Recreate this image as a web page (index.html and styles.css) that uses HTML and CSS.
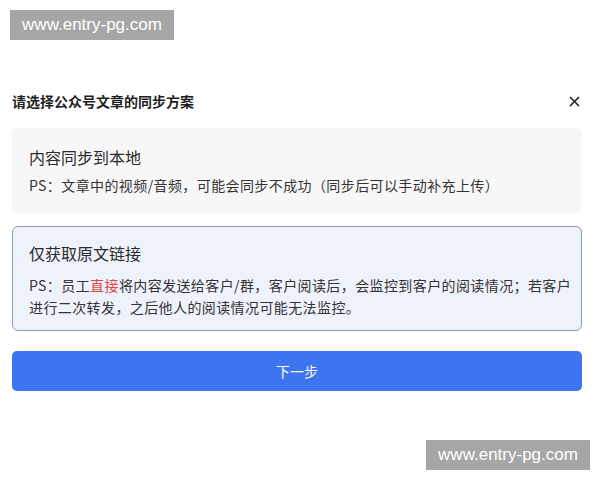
FILE: index.html
```html
<!DOCTYPE html>
<html lang="zh-CN">
<head>
  <meta charset="UTF-8">
  <meta name="viewport" content="width=device-width, initial-scale=1.0">
  <title>同步方案</title>
  <link rel="stylesheet" href="styles.css">
</head>
<body>
  <div class="dialog">
    <div class="dialog-header">
      <h2>请选择公众号文章的同步方案</h2>
      <span class="close">
        <svg width="11" height="11" viewBox="0 0 11 11"><path d="M1 1L10 10M10 1L1 10" stroke="#222" stroke-width="1.6" fill="none"/></svg>
      </span>
    </div>

    <div class="option">
      <h3>内容同步到本地</h3>
      <p>PS：文章中的视频/音频，可能会同步不成功（同步后可以手动补充上传）</p>
    </div>

    <div class="option active">
      <h3>仅获取原文链接</h3>
      <p>PS：员工<span class="hl">直接</span>将内容发送给客户/群，客户阅读后，会监控到客户的阅读情况；若客户进行二次转发，之后他人的阅读情况可能无法监控。</p>
    </div>

    <a href="#" class="btn">下一步</a>
  </div>

  <div class="mark mark-top">www.entry-pg.com</div>
  <div class="mark mark-bottom">www.entry-pg.com</div>
</body>
</html>
```

FILE: styles.css
```css
* {
  margin: 0;
  padding: 0;
  box-sizing: border-box;
}

body {
  background: #fff;
  font-family: 'Noto Sans CJK SC', 'Noto Sans', sans-serif;
  color: #333;
  width: 600px;
  height: 480px;
  position: relative;
  overflow: hidden;
}

.dialog {
  padding: 91px 18px 0 12px;
}

.dialog-header {
  display: flex;
  justify-content: space-between;
  align-items: center;
  height: 20px;
  margin-bottom: 17px;
}

.dialog-header h2 {
  font-size: 14px;
  font-weight: bold;
  color: #1f1f1f;
  line-height: 20px;
}

.close {
  display: flex;
  margin-right: 2px;
}

.option {
  background: #f7f7f7;
  border-radius: 6px;
  padding: 17px 17px 17px;
  margin-bottom: 13px;
}

.option h3 {
  font-size: 16px;
  font-weight: normal;
  color: #2b2b2b;
  line-height: 24px;
  margin-bottom: 5px;
}

.option p {
  font-size: 14px;
  line-height: 22px;
  letter-spacing: 0.4px;
  color: #333;
}

.option.active {
  background: #eef2fb;
  border: 1px solid #8d9bb6;
  padding: 14px 8px 12px 16px;
  margin-bottom: 20px;
}

.option.active h3 {
  margin-bottom: 9px;
}

.hl {
  color: #e0443a;
}

.btn {
  display: block;
  height: 40px;
  line-height: 40px;
  background: #3d74ef;
  color: #fff;
  text-align: center;
  font-size: 14px;
  text-decoration: none;
  border-radius: 5px;
}

.mark {
  position: absolute;
  width: 164px;
  height: 30px;
  line-height: 30px;
  background: #a6a6a6;
  color: #fff;
  text-align: center;
  font-family: 'Liberation Sans', Arial, sans-serif;
  font-size: 17px;
}

.mark-top {
  left: 10px;
  top: 10px;
}

.mark-bottom {
  left: 426px;
  top: 440px;
}
```
